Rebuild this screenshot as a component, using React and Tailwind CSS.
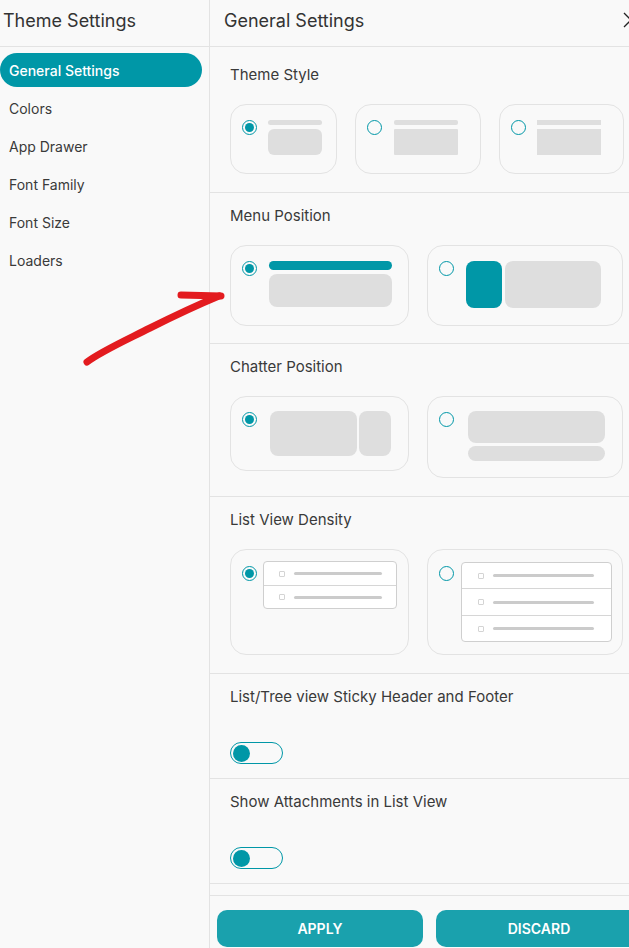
import React from "react";

function Radio({ on }) {
  return (
    <span className="flex h-[15px] w-[15px] shrink-0 items-center justify-center rounded-full border-[1.5px] border-[#0097a7]">
      {on && <span className="h-[9px] w-[9px] rounded-full bg-[#0097a7]" />}
    </span>
  );
}

function Toggle() {
  return (
    <div className="flex h-[22px] w-[53px] items-center rounded-full border-[1.5px] border-[#0097a7] pl-[1.5px]">
      <span className="h-[17px] w-[17px] rounded-full bg-[#0097a7]" />
    </div>
  );
}

function Label({ children }) {
  return <div className="text-[15px] leading-[20px] text-[#3a3a3a]">{children}</div>;
}

function Row({ pl, line, h, last }) {
  return (
    <div className={`flex items-center ${pl} ${h} ${last ? "" : "border-b border-[#d6d6d6]"}`}>
      <span className="h-[6px] w-[6px] rounded-[1px] border border-[#d4d4d4]" />
      <span className={`ml-[9px] h-[3px] rounded-full bg-[#cbcbcb] ${line}`} />
    </div>
  );
}

const card = "shrink-0 rounded-[16px] border border-[#e3e3e3]";

export default function App() {
  const items = ["Colors", "App Drawer", "Font Family", "Font Size", "Loaders"];
  return (
    <div
      className="relative flex h-[948px] w-[629px] overflow-hidden bg-[#f9f9f9] text-[#333]"
      style={{ fontFamily: "Inter, 'Noto Sans', sans-serif" }}
    >
      {/* Sidebar */}
      <aside className="flex w-[210px] shrink-0 flex-col border-r border-[#e3e3e3]">
        <div className="flex h-[47px] items-center border-b border-[#e3e3e3] pb-[6px] pl-[3px] text-[18px] text-[#333]">
          Theme Settings
        </div>
        <div className="mt-[6px] flex h-[34px] w-[202px] items-center rounded-full bg-[#0097a7] pl-[9px] text-[14px] font-medium text-white">
          General Settings
        </div>
        <div className="mt-[2px] flex flex-col">
          {items.map((t) => (
            <div key={t} className="flex h-[38px] items-center pl-[9px] text-[14px] text-[#3a3a3a]">
              {t}
            </div>
          ))}
        </div>
      </aside>

      {/* Main panel */}
      <main className="flex min-w-0 flex-1 flex-col">
        <div className="flex h-[47px] shrink-0 items-center justify-between border-b border-[#e3e3e3] pb-[6px] pl-[14px]">
          <span className="text-[18px] text-[#333]">General Settings</span>
          <svg width="16" height="16" viewBox="0 0 16 16" className="mr-[-10px] shrink-0">
            <path d="M1 1 L15 15 M15 1 L1 15" stroke="#222" strokeWidth="1.3" fill="none" />
          </svg>
        </div>

        <div className="min-h-0 flex-1 overflow-hidden">
          {/* Theme Style */}
          <section className="border-b border-[#e3e3e3] px-[20px] pb-[18px] pt-[18px]">
            <Label>Theme Style</Label>
            <div className="mt-[19px] flex gap-[18px]">
              <div className={`${card} flex h-[70px] w-[107px] gap-[11px] pl-[11px] pt-[15px]`}>
                <Radio on />
                <div className="flex flex-col">
                  <div className="h-[5px] w-[54px] rounded-full bg-[#dedede]" />
                  <div className="mt-[4px] h-[26px] w-[54px] rounded-[6px] bg-[#dedede]" />
                </div>
              </div>
              <div className={`${card} flex h-[70px] w-[126px] gap-[12px] pl-[11px] pt-[15px]`}>
                <Radio />
                <div className="flex flex-col">
                  <div className="h-[5px] w-[64px] rounded-[2px] bg-[#dedede]" />
                  <div className="mt-[4px] h-[26px] w-[64px] rounded-[1px] bg-[#dedede]" />
                </div>
              </div>
              <div className={`${card} flex h-[70px] w-[125px] gap-[11px] pl-[11px] pt-[15px]`}>
                <Radio />
                <div className="flex flex-col">
                  <div className="h-[5px] w-[64px] bg-[#dedede]" />
                  <div className="mt-[4px] h-[26px] w-[64px] bg-[#dedede]" />
                </div>
              </div>
            </div>
          </section>

          {/* Menu Position */}
          <section className="border-b border-[#e3e3e3] px-[20px] pb-[17px] pt-[13px]">
            <Label>Menu Position</Label>
            <div className="mt-[19px] flex gap-[18px]">
              <div className={`${card} flex h-[81px] w-[179px] gap-[12px] pl-[11px] pt-[15px]`}>
                <Radio on />
                <div className="flex flex-col">
                  <div className="h-[9px] w-[123px] rounded-full bg-[#0097a7]" />
                  <div className="mt-[4px] h-[33px] w-[123px] rounded-[8px] bg-[#dedede]" />
                </div>
              </div>
              <div className={`${card} flex h-[81px] w-[196px] gap-[12px] pl-[11px] pt-[15px]`}>
                <Radio />
                <div className="flex gap-[3px]">
                  <div className="h-[47px] w-[36px] rounded-[8px] bg-[#0097a7]" />
                  <div className="h-[47px] w-[96px] rounded-[8px] bg-[#dedede]" />
                </div>
              </div>
            </div>
          </section>

          {/* Chatter Position */}
          <section className="border-b border-[#e3e3e3] px-[20px] pb-[18px] pt-[13px]">
            <Label>Chatter Position</Label>
            <div className="mt-[19px] flex items-start gap-[18px]">
              <div className={`${card} flex h-[75px] w-[179px] items-start gap-[13px] pl-[11px] pt-[14px]`}>
                <span className="mt-[1px]">
                  <Radio on />
                </span>
                <div className="flex gap-[2px]">
                  <div className="h-[45px] w-[87px] rounded-[8px] bg-[#dedede]" />
                  <div className="h-[45px] w-[32px] rounded-[8px] bg-[#dedede]" />
                </div>
              </div>
              <div className={`${card} flex h-[82px] w-[196px] items-start gap-[14px] pl-[11px] pt-[14px]`}>
                <span className="mt-[1px]">
                  <Radio />
                </span>
                <div className="flex flex-col">
                  <div className="h-[32px] w-[137px] rounded-[8px] bg-[#dedede]" />
                  <div className="mt-[3px] h-[15px] w-[137px] rounded-full bg-[#dedede]" />
                </div>
              </div>
            </div>
          </section>

          {/* List View Density */}
          <section className="border-b border-[#e3e3e3] px-[20px] pb-[18px] pt-[13px]">
            <Label>List View Density</Label>
            <div className="mt-[19px] flex gap-[18px]">
              <div className={`${card} flex h-[106px] w-[179px] items-start pl-[11px] pt-[11px]`}>
                <span className="mt-[5px]">
                  <Radio on />
                </span>
                <div className="ml-[6px] flex w-[134px] flex-col rounded-[4px] border border-[#cfcfcf] bg-white">
                  <Row pl="pl-[15px]" line="w-[88px]" h="h-[24px]" />
                  <Row pl="pl-[15px]" line="w-[88px]" h="h-[22px]" last />
                </div>
              </div>
              <div className={`${card} flex h-[106px] w-[196px] items-start pl-[11px] pt-[12px]`}>
                <span className="mt-[4px]">
                  <Radio />
                </span>
                <div className="ml-[7px] flex w-[151px] flex-col rounded-[4px] border border-[#cfcfcf] bg-white">
                  <Row pl="pl-[16px]" line="w-[101px]" h="h-[26px]" />
                  <Row pl="pl-[16px]" line="w-[101px]" h="h-[27px]" />
                  <Row pl="pl-[16px]" line="w-[101px]" h="h-[25px]" last />
                </div>
              </div>
            </div>
          </section>

          {/* Sticky header */}
          <section className="border-b border-[#e3e3e3] px-[20px] pb-[14px] pt-[13px]">
            <Label>List/Tree view Sticky Header and Footer</Label>
            <div className="mt-[35px]">
              <Toggle />
            </div>
          </section>

          {/* Attachments */}
          <section className="border-b border-[#e3e3e3] px-[20px] pb-[14px] pt-[13px]">
            <Label>Show Attachments in List View</Label>
            <div className="mt-[35px]">
              <Toggle />
            </div>
          </section>

          <section className="h-[80px] px-[20px]" />
        </div>

        {/* Footer */}
        <div className="flex h-[53px] shrink-0 gap-[13px] border-t border-[#e3e3e3] pl-[7px] pt-[14px]">
          <button className="flex h-[37px] w-[206px] shrink-0 items-center justify-center rounded-[10px] bg-[#1aa1ad] text-[14px] font-semibold text-white">
            APPLY
          </button>
          <button className="flex h-[37px] w-[206px] shrink-0 items-center justify-center rounded-[10px] bg-[#1aa1ad] text-[14px] font-semibold text-white">
            DISCARD
          </button>
        </div>
      </main>

      {/* Red hand-drawn arrow annotation */}
      <svg
        className="pointer-events-none absolute left-0 top-0"
        width="629"
        height="948"
        viewBox="0 0 629 948"
      >
        <path
          d="M87 362 C 100 352, 120 343, 150 328 S 195 306, 219 296"
          stroke="#e31b1f"
          strokeWidth="7"
          strokeLinecap="round"
          fill="none"
        />
        <path d="M181 295 L 221 296" stroke="#e31b1f" strokeWidth="7" strokeLinecap="round" fill="none" />
      </svg>
    </div>
  );
}
